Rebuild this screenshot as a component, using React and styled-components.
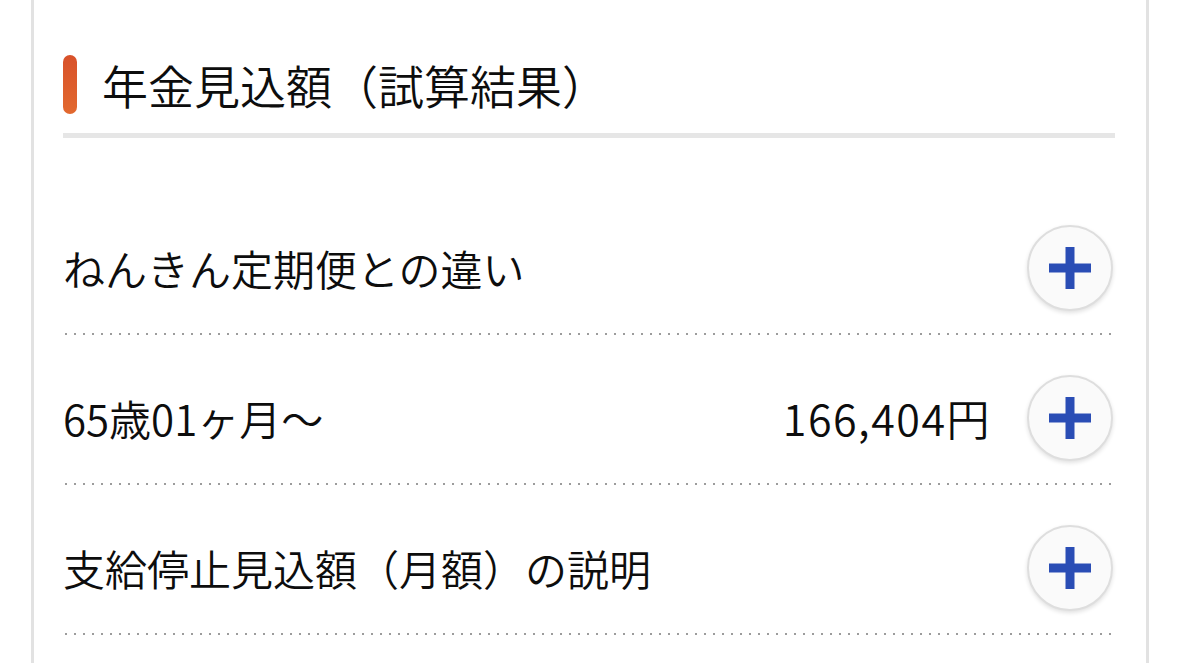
import React from 'react';
import styled, { createGlobalStyle } from 'styled-components';

const GlobalStyle = createGlobalStyle`
    html, body {
        margin: 0;
        padding: 0;
        background: #fff;
    }
    body {
        font-family: "Noto Sans CJK JP", "Noto Sans", sans-serif;
        color: #0d0d0d;
    }
`;

const Page = styled.div`
    padding: 0 30px 0 31px;
    height: 663px;
    overflow: hidden;
`;

const Card = styled.section`
    border-left: 3px solid #e2e2e2;
    border-right: 3px solid #e2e2e2;
    padding: 55px 31px 40px 29px;
    min-height: 700px;
    box-sizing: border-box;
`;

const Header = styled.div`
    display: flex;
    align-items: center;
    gap: 25px;
    padding-bottom: 19px;
    border-bottom: 5px solid #e6e6e6;
`;

const Accent = styled.span`
    width: 14px;
    height: 59px;
    border-radius: 7px;
    background: linear-gradient(to bottom, #d8512a, #e2692f);
    flex-shrink: 0;
`;

const Title = styled.h2`
    margin: 0;
    font-size: 46px;
    font-weight: 350;
    line-height: 59px;
`;

const List = styled.ul`
    list-style: none;
    margin: 47px 0 0;
    padding: 0;
`;

const Row = styled.li`
    display: flex;
    align-items: center;
    height: 150px;
    box-sizing: border-box;
    padding: 18px 2px 2px 0;
    background-image: linear-gradient(to right, #9c9c9c 2px, transparent 2px);
    background-size: 9px 2px;
    background-repeat: repeat-x;
    background-position: 2px bottom;
`;

const Label = styled.span`
    flex: 1;
    font-size: 42px;
    font-weight: 350;
    line-height: 1.2;
`;

const Amount = styled.span`
    font-size: 43px;
    font-weight: 350;
    line-height: 1.2;
    letter-spacing: 1.5px;
    margin-right: 36px;
`;

const ToggleButton = styled.button`
    width: 86px;
    height: 86px;
    border-radius: 50%;
    border: 2px solid #dedede;
    background: #fafafa;
    box-shadow: 0 2px 4px rgba(0, 0, 0, 0.12);
    display: flex;
    align-items: center;
    justify-content: center;
    padding: 0;
    cursor: pointer;
    flex-shrink: 0;
`;

const PlusIcon = () => (
    <svg width="42" height="42" viewBox="0 0 42 42" aria-hidden="true">
        <rect x="0" y="16.5" width="42" height="9" fill="#2a4db5" />
        <rect x="16.5" y="0" width="9" height="42" fill="#2a4db5" />
    </svg>
);

const rows = [
    { label: 'ねんきん定期便との違い' },
    { label: '65歳01ヶ月〜', amount: '166,404円' },
    { label: '支給停止見込額（月額）の説明' },
];

const App = () => (
    <>
        <GlobalStyle />
        <Page>
            <Card>
                <Header>
                    <Accent />
                    <Title>年金見込額（試算結果）</Title>
                </Header>
                <List>
                    {rows.map((row) => (
                        <Row key={row.label}>
                            <Label>{row.label}</Label>
                            {row.amount && <Amount>{row.amount}</Amount>}
                            <ToggleButton aria-label="開く">
                                <PlusIcon />
                            </ToggleButton>
                        </Row>
                    ))}
                </List>
            </Card>
        </Page>
    </>
);

export default App;
